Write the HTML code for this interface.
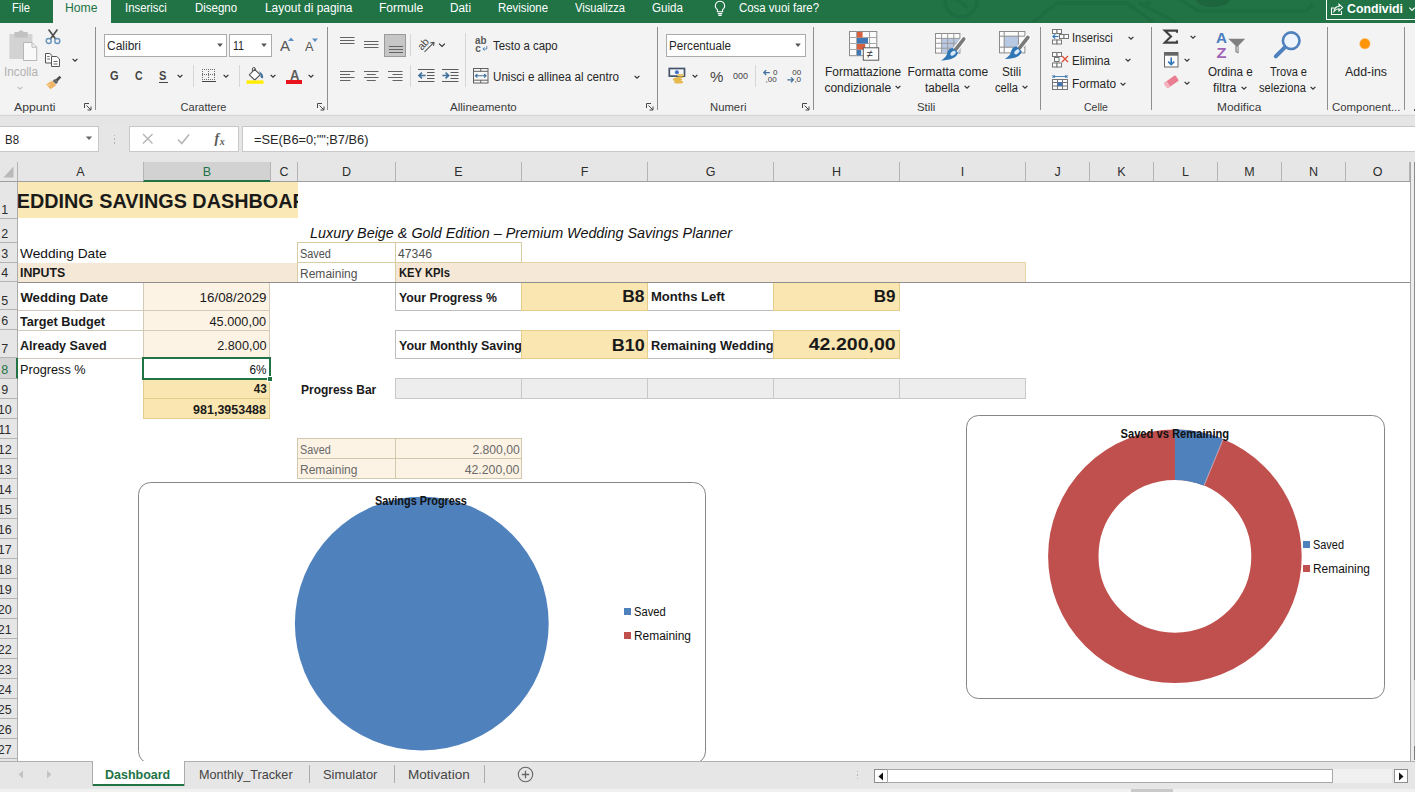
<!DOCTYPE html><html lang="it"><head><meta charset="utf-8"><title>Wedding Savings Dashboard - Excel</title><style>
*{box-sizing:border-box;margin:0;padding:0}
html,body{width:1415px;height:792px;overflow:hidden;background:#fff}
body{font-family:"Liberation Sans",sans-serif;font-size:12px;color:#262626;position:relative}
.a{position:absolute}
.t{position:absolute;white-space:nowrap;line-height:1}
.clip{position:absolute;overflow:hidden}
svg{position:absolute;overflow:visible}
</style></head><body>
<div class="a" style="left:0px;top:0px;width:1415px;height:22.5px;background:#217346;"></div>
<svg style="left:0;top:0" width="1415" height="22" viewBox="0 0 1415 22"><g fill="none" stroke="#1e6c41" stroke-width="3.5" stroke-linejoin="round"><circle cx="961" cy="1" r="16"/><path d="M1033 22 L1057 3 H1127 L1153 22"/><path d="M1139 3 L1176 22"/><path d="M1178 -2 L1198.5 11.3 H1306 L1313 4"/></g><circle cx="1147.7" cy="3.4" r="3" fill="#1e6c41"/><ellipse cx="1213" cy="-1" rx="17" ry="8" fill="#1c653d"/><path d="M953 -3 L968 8" stroke="#1e6c41" stroke-width="3" fill="none"/></svg>
<div class="a" style="left:53px;top:0px;width:58px;height:24px;background:#f3f3f3;"></div>
<div class="t" style="top:2.05px;font-size:12.5px;color:#fff;left:12.00px;transform:scaleX(0.8936);transform-origin:0 50%;">File</div>
<div class="t" style="top:2.05px;font-size:12.5px;color:#217346;left:65.40px;transform:scaleX(0.9777);transform-origin:0 50%;">Home</div>
<div class="t" style="top:2.05px;font-size:12.5px;color:#fff;left:125.00px;transform:scaleX(0.9096);transform-origin:0 50%;">Inserisci</div>
<div class="t" style="top:2.05px;font-size:12.5px;color:#fff;left:194.60px;transform:scaleX(0.9158);transform-origin:0 50%;">Disegno</div>
<div class="t" style="top:2.05px;font-size:12.5px;color:#fff;left:264.60px;transform:scaleX(0.9526);transform-origin:0 50%;">Layout di pagina</div>
<div class="t" style="top:2.05px;font-size:12.5px;color:#fff;left:379.00px;transform:scaleX(0.9641);transform-origin:0 50%;">Formule</div>
<div class="t" style="top:2.05px;font-size:12.5px;color:#fff;left:450.00px;transform:scaleX(0.9447);transform-origin:0 50%;">Dati</div>
<div class="t" style="top:2.05px;font-size:12.5px;color:#fff;left:498.00px;transform:scaleX(0.9109);transform-origin:0 50%;">Revisione</div>
<div class="t" style="top:2.05px;font-size:12.5px;color:#fff;left:575.00px;transform:scaleX(0.8920);transform-origin:0 50%;">Visualizza</div>
<div class="t" style="top:2.05px;font-size:12.5px;color:#fff;left:652.00px;transform:scaleX(0.9294);transform-origin:0 50%;">Guida</div>
<div class="t" style="top:2.05px;font-size:12.5px;color:#fff;left:739.00px;transform:scaleX(0.9138);transform-origin:0 50%;">Cosa vuoi fare?</div>
<svg style="left:711.5px;top:0px" width="16" height="18" viewBox="0 0 16 18"><g fill="none" stroke="#fff" stroke-width="1.1"><path d="M8 1.2 a4.6 4.6 0 0 1 2.6 8.4 v2.2 h-5.2 v-2.2 a4.6 4.6 0 0 1 2.6 -8.4 Z"/><path d="M5.8 13.6 h4.4 M6.4 15.4 h3.2"/></g></svg>
<div class="a" style="left:1326px;top:-2px;width:94px;height:22px;border:1px solid #fff;"></div>
<svg style="left:1330px;top:2px" width="14" height="14" viewBox="0 0 14 14"><g fill="none" stroke="#fff" stroke-width="1.1"><path d="M4.5 6 H1.5 V12.5 H11.5 V9"/><path d="M4 9.5 Q4.5 4.5 9 4.5 V2.2 L12.6 5.6 L9 9 V6.8 Q6 6.8 4 9.5 Z"/></g></svg>
<div class="t" style="top:3.05px;font-size:12.5px;font-weight:700;color:#fff;left:1347.00px;transform:scaleX(0.9835);transform-origin:0 50%;">Condividi</div>
<svg style="left:1406.5px;top:3.5px" width="10" height="10" viewBox="0 0 10 10"><path d="M2.4 3.7 L5 6.3 L7.6 3.7" fill="none" stroke="#fff" stroke-width="1.2"/></svg>
<div class="a" style="left:0px;top:22.5px;width:1415px;height:104.5px;background:#e5e5e5;"></div>
<div class="a" style="left:0px;top:22.5px;width:1415px;height:92.5px;background:#f3f3f3;"></div>
<div class="a" style="left:0px;top:114px;width:1415px;height:1px;background:#ececec;"></div>
<div class="a" style="left:0px;top:115px;width:1415px;height:1px;background:#d6d6d6;"></div>
<div class="a" style="left:95px;top:27px;width:1px;height:83px;background:#8f8f8f;"></div>
<div class="a" style="left:327px;top:27px;width:1px;height:83px;background:#8f8f8f;"></div>
<div class="a" style="left:657px;top:27px;width:1px;height:83px;background:#8f8f8f;"></div>
<div class="a" style="left:813px;top:27px;width:1px;height:83px;background:#8f8f8f;"></div>
<div class="a" style="left:1040px;top:27px;width:1px;height:83px;background:#8f8f8f;"></div>
<div class="a" style="left:1151px;top:27px;width:1px;height:83px;background:#8f8f8f;"></div>
<div class="a" style="left:1327px;top:27px;width:1px;height:83px;background:#8f8f8f;"></div>
<div class="a" style="left:1404px;top:27px;width:1px;height:83px;background:#8f8f8f;"></div>
<div class="a" style="left:193px;top:65px;width:1px;height:22px;background:#d6d6d6;"></div>
<div class="a" style="left:239px;top:65px;width:1px;height:22px;background:#d6d6d6;"></div>
<div class="a" style="left:410px;top:34px;width:1px;height:22px;background:#d6d6d6;"></div>
<div class="a" style="left:410px;top:65px;width:1px;height:22px;background:#d6d6d6;"></div>
<div class="a" style="left:465px;top:33px;width:1px;height:54px;background:#d6d6d6;"></div>
<div class="a" style="left:755px;top:65px;width:1px;height:22px;background:#d6d6d6;"></div>
<div class="t" style="top:101.80px;font-size:11px;color:#3b3b3b;left:14.00px;transform:scaleX(1.1123);transform-origin:0 50%;">Appunti</div>
<div class="t" style="top:101.80px;font-size:11px;color:#3b3b3b;left:180.60px;">Carattere</div>
<div class="t" style="top:101.80px;font-size:11px;color:#3b3b3b;left:450.40px;transform:scaleX(1.0504);transform-origin:0 50%;">Allineamento</div>
<div class="t" style="top:101.80px;font-size:11px;color:#3b3b3b;left:709.60px;transform:scaleX(1.0268);transform-origin:0 50%;">Numeri</div>
<div class="t" style="top:101.80px;font-size:11px;color:#3b3b3b;left:917.40px;transform:scaleX(1.0381);transform-origin:0 50%;">Stili</div>
<div class="t" style="top:101.80px;font-size:11px;color:#3b3b3b;left:1083.70px;transform:scaleX(0.9534);transform-origin:0 50%;">Celle</div>
<div class="t" style="top:101.80px;font-size:11px;color:#3b3b3b;left:1217.40px;transform:scaleX(1.0840);transform-origin:0 50%;">Modifica</div>
<div class="t" style="top:101.80px;font-size:11px;color:#3b3b3b;left:1331.60px;transform:scaleX(1.0358);transform-origin:0 50%;">Component...</div>
<svg style="left:84px;top:103px" width="8" height="8" viewBox="0 0 8 8"><path d="M0.5 5 V0.5 H5" fill="none" stroke="#484848" stroke-width="1"/><path d="M2.5 2.5 L7 7 M7 3.5 V7 H3.5" fill="none" stroke="#484848" stroke-width="1"/></svg>
<svg style="left:316.5px;top:103px" width="8" height="8" viewBox="0 0 8 8"><path d="M0.5 5 V0.5 H5" fill="none" stroke="#484848" stroke-width="1"/><path d="M2.5 2.5 L7 7 M7 3.5 V7 H3.5" fill="none" stroke="#484848" stroke-width="1"/></svg>
<svg style="left:646px;top:103px" width="8" height="8" viewBox="0 0 8 8"><path d="M0.5 5 V0.5 H5" fill="none" stroke="#484848" stroke-width="1"/><path d="M2.5 2.5 L7 7 M7 3.5 V7 H3.5" fill="none" stroke="#484848" stroke-width="1"/></svg>
<svg style="left:802px;top:103px" width="8" height="8" viewBox="0 0 8 8"><path d="M0.5 5 V0.5 H5" fill="none" stroke="#484848" stroke-width="1"/><path d="M2.5 2.5 L7 7 M7 3.5 V7 H3.5" fill="none" stroke="#484848" stroke-width="1"/></svg>
<div class="a" style="left:1413.6px;top:108.6px;width:1.400000000000091px;height:2.4000000000000057px;background:#555;"></div>
<svg style="left:9px;top:31px" width="29" height="31" viewBox="0 0 29 31"><rect x="0.4" y="3" width="23" height="25" fill="#d3d3d3"/><rect x="5.4" y="1" width="13.3" height="5.5" fill="#c2c2c2"/><rect x="9.5" y="-0.5" width="5" height="3" rx="1.5" fill="#c2c2c2"/><path d="M14.5 11.5 H23 L27.7 16.2 V29.5 H14.5 Z" fill="#f9f9f9" stroke="#b7b7b7" stroke-width="1"/><path d="M23 11.5 V16.2 H27.7" fill="none" stroke="#b7b7b7" stroke-width="1"/></svg>
<div class="t" style="top:66.05px;font-size:12.5px;color:#b1b1b1;left:3.50px;transform:scaleX(0.9409);transform-origin:0 50%;">Incolla</div>
<svg style="left:15px;top:82.5px" width="10" height="10" viewBox="0 0 10 10"><path d="M2.6 3.8 L5 6.2 L7.4 3.8" fill="none" stroke="#c0c0c0" stroke-width="1.2"/></svg>
<svg style="left:45px;top:29px" width="16" height="16" viewBox="0 0 16 16"><g fill="none"><path d="M3.6 0.5 L10.8 10.2 M12.4 0.5 L5.2 10.2" stroke="#505050" stroke-width="1.7"/><circle cx="3.7" cy="12" r="2.5" stroke="#6a93bb" stroke-width="1.4"/><circle cx="12.3" cy="12" r="2.5" stroke="#6a93bb" stroke-width="1.4"/></g></svg>
<svg style="left:45px;top:53px" width="16" height="14" viewBox="0 0 16 14"><g fill="#fbfbfb" stroke="#555" stroke-width="1"><path d="M0.5 0.5 H4.8 L7.5 3 V10 H0.5 Z"/><path d="M6.5 3.5 H11.8 L14.5 6 V13.5 H6.5 Z"/></g><path d="M2.2 3.5 H4.6 M2.2 6 H5 M8.5 8.5 H12.5 M8.5 11 H12.5" stroke="#6b6b6b" stroke-width="1" fill="none"/></svg>
<svg style="left:70.4px;top:55.4px" width="10" height="10" viewBox="0 0 10 10"><path d="M2.6 3.8 L5 6.2 L7.4 3.8" fill="none" stroke="#303030" stroke-width="1.2"/></svg>
<svg style="left:45px;top:75px" width="17" height="15" viewBox="0 0 17 15"><g><path d="M10.5 4.5 L14.5 0.8 L16.3 2.6 L12.5 6.6 Z" fill="#4d4d4d"/><path d="M7.5 6 L10 3.8 L13.2 7 L11 9.3 Z" fill="#666"/><path d="M1 9.5 L6.8 5.8 L11.2 10.2 L5.5 14.2 Z" fill="#f0b463"/><path d="M1 9.5 L3.5 11.6 L6 9.2 Z" fill="#f6cf98"/></g></svg>
<div class="a" style="left:104px;top:34px;width:123px;height:23px;background:#fff;border:1px solid #ababab;"></div>
<div class="t" style="top:40.05px;font-size:12.5px;color:#262626;left:107.30px;transform:scaleX(0.9597);transform-origin:0 50%;">Calibri</div>
<svg style="left:214.7px;top:40.3px" width="10" height="10" viewBox="0 0 10 10"><path d="M2.2 3.6 L7.8 3.6 L5 6.9 Z" fill="#555"/></svg>
<div class="a" style="left:229px;top:34px;width:43px;height:23px;background:#fff;border:1px solid #ababab;"></div>
<div class="t" style="top:40.05px;font-size:12.5px;color:#262626;left:232.70px;transform:scaleX(0.8477);transform-origin:0 50%;">11</div>
<svg style="left:259px;top:40.3px" width="10" height="10" viewBox="0 0 10 10"><path d="M2.2 3.6 L7.8 3.6 L5 6.9 Z" fill="#555"/></svg>
<div class="t" style="top:38.30px;font-size:15px;color:#555;left:280.00px;">A</div>
<svg style="left:288px;top:37px" width="6" height="5" viewBox="0 0 6 5"><path d="M0 4 L3 0.5 L6 4 Z" fill="#5a8fc4"/></svg>
<div class="t" style="top:41.05px;font-size:12.5px;color:#555;left:305.00px;transform:scaleX(1.0194);transform-origin:0 50%;">A</div>
<svg style="left:312px;top:37.5px" width="6" height="5" viewBox="0 0 6 5"><path d="M0 0.5 L6 0.5 L3 4 Z" fill="#5a8fc4"/></svg>
<div class="t" style="top:70.05px;font-size:12.5px;font-weight:700;color:#444;left:110.30px;transform:scaleX(0.8845);transform-origin:0 50%;">G</div>
<div class="t" style="top:70.05px;font-size:12.5px;font-weight:700;color:#444;left:135.40px;transform:scaleX(0.8419);transform-origin:0 50%;">C</div>
<div class="t" style="top:70.05px;font-size:12.5px;font-weight:700;color:#444;left:159.40px;transform:scaleX(0.8875);transform-origin:0 50%;">S</div>
<div class="a" style="left:159px;top:81.5px;width:8.5px;height:1.0px;background:#444;"></div>
<svg style="left:175.3px;top:71px" width="10" height="10" viewBox="0 0 10 10"><path d="M2.6 3.8 L5 6.2 L7.4 3.8" fill="none" stroke="#303030" stroke-width="1.2"/></svg>
<svg style="left:201px;top:68px" width="15" height="15" viewBox="0 0 15 15"><g stroke="#6e6e6e" stroke-width="1" stroke-dasharray="1 1" fill="none" shape-rendering="crispEdges"><path d="M1 1.5 H14 M1 6.5 H14 M1 11.5 H14 M1.5 1 V12 M7.5 1 V12 M13.5 1 V12"/></g><path d="M0.5 13.5 H14.5" stroke="#444" stroke-width="1.2" shape-rendering="crispEdges"/></svg>
<svg style="left:221.4px;top:71px" width="10" height="10" viewBox="0 0 10 10"><path d="M2.6 3.8 L5 6.2 L7.4 3.8" fill="none" stroke="#303030" stroke-width="1.2"/></svg>
<svg style="left:246px;top:66px" width="18" height="19" viewBox="0 0 18 19"><path d="M8.7 3.4 L14.2 8.8 L8.7 14 L3.3 8.8 Z" fill="#fcfcfc" stroke="#555" stroke-width="1.1" stroke-linejoin="round"/><path d="M6.4 5.8 V3 a1.5 1.5 0 0 1 3 0 V4.2" fill="none" stroke="#555" stroke-width="1"/><path d="M12.6 5 Q18.2 8 17 12.2 Q14.2 12.6 14.6 9.2 Q14.4 7 12.6 5 Z" fill="#41719c"/><rect x="0.5" y="14.4" width="17" height="3.4" fill="#ffed00"/></svg>
<svg style="left:267.6px;top:71px" width="10" height="10" viewBox="0 0 10 10"><path d="M2.6 3.8 L5 6.2 L7.4 3.8" fill="none" stroke="#303030" stroke-width="1.2"/></svg>
<div class="t" style="top:68.30px;font-size:14px;font-weight:700;color:#5e5e5e;left:289.80px;transform:scaleX(0.9297);transform-origin:0 50%;">A</div>
<div class="a" style="left:286px;top:80.3px;width:16px;height:3.5px;background:#e8131c;"></div>
<svg style="left:306px;top:71px" width="10" height="10" viewBox="0 0 10 10"><path d="M2.6 3.8 L5 6.2 L7.4 3.8" fill="none" stroke="#303030" stroke-width="1.2"/></svg>
<svg style="left:339.8px;top:37px" width="15" height="9" viewBox="0 0 15 9"><path d="M0 0.5 H14.5" stroke="#636363" stroke-width="1"/><path d="M0 3.5 H14.5" stroke="#636363" stroke-width="1"/><path d="M0 6.5 H14.5" stroke="#636363" stroke-width="1"/></svg>
<svg style="left:363.7px;top:41px" width="15" height="9" viewBox="0 0 15 9"><path d="M0 0.5 H14.5" stroke="#636363" stroke-width="1"/><path d="M0 3.5 H14.5" stroke="#636363" stroke-width="1"/><path d="M0 6.5 H14.5" stroke="#636363" stroke-width="1"/></svg>
<div class="a" style="left:384px;top:34px;width:22px;height:23px;background:#c6c6c6;border:1px solid #9a9a9a;"></div>
<svg style="left:388.5px;top:46px" width="14" height="9" viewBox="0 0 14 9"><path d="M0 0.5 H14" stroke="#636363" stroke-width="1"/><path d="M0 3.5 H14" stroke="#636363" stroke-width="1"/><path d="M0 6.5 H14" stroke="#636363" stroke-width="1"/></svg>
<svg style="left:339.8px;top:71px" width="15" height="12" viewBox="0 0 15 12"><path d="M0 0.5 H14.5" stroke="#636363" stroke-width="1"/><path d="M0 3.5 H10" stroke="#636363" stroke-width="1"/><path d="M0 6.5 H14.5" stroke="#636363" stroke-width="1"/><path d="M0 9.5 H10.5" stroke="#636363" stroke-width="1"/></svg>
<svg style="left:363.7px;top:71px" width="14.5" height="12" viewBox="0 0 14.5 12"><path d="M0.0 0.5 H14.5" stroke="#636363" stroke-width="1"/><path d="M2.75 3.5 H11.75" stroke="#636363" stroke-width="1"/><path d="M0.0 6.5 H14.5" stroke="#636363" stroke-width="1"/><path d="M2.75 9.5 H11.75" stroke="#636363" stroke-width="1"/></svg>
<svg style="left:388px;top:71px" width="14.5" height="12" viewBox="0 0 14.5 12"><path d="M0.0 0.5 H14.5" stroke="#636363" stroke-width="1"/><path d="M4.5 3.5 H14.5" stroke="#636363" stroke-width="1"/><path d="M0.0 6.5 H14.5" stroke="#636363" stroke-width="1"/><path d="M4.5 9.5 H14.5" stroke="#636363" stroke-width="1"/></svg>
<svg style="left:417px;top:36px" width="20" height="18" viewBox="0 0 20 18"><g transform="rotate(-48 7 8)"><text x="0.5" y="11" font-family="Liberation Sans,sans-serif" font-size="10.5" fill="#4a4a4a">ab</text></g><path d="M7.5 15.8 L17 6.4 M17.2 6.2 L13.4 6.9 M17.2 6.2 L16.5 10" stroke="#5a5a5a" stroke-width="1.1" fill="none"/></svg>
<svg style="left:437px;top:40.3px" width="10" height="10" viewBox="0 0 10 10"><path d="M2.1 3.55 L5 6.45 L7.9 3.55" fill="none" stroke="#303030" stroke-width="1.2"/></svg>
<svg style="left:417.5px;top:69px" width="17" height="13" viewBox="0 0 17 13"><g stroke="#5a5a5a" stroke-width="1"><path d="M0 0.5 H16.5 M9 3.5 H16.5 M9 6.5 H16.5 M9 9.5 H16.5 M0 12.5 H16.5"/></g><path d="M7.6 6.5 H1.4 M4 3.6 L1 6.5 L4 9.4" stroke="#41719c" stroke-width="1.7" fill="none"/></svg>
<svg style="left:441.8px;top:69px" width="17" height="13" viewBox="0 0 17 13"><g stroke="#5a5a5a" stroke-width="1"><path d="M0 0.5 H16.5 M8.5 3.5 H16.5 M8.5 6.5 H16.5 M8.5 9.5 H16.5 M0 12.5 H16.5"/></g><path d="M0.4 6.5 H6.2 M3.6 3.6 L6.6 6.5 L3.6 9.4" stroke="#41719c" stroke-width="1.7" fill="none"/></svg>
<svg style="left:474.5px;top:36px" width="14" height="17" viewBox="0 0 14 17"><text x="0" y="7.7" font-family="Liberation Sans,sans-serif" font-size="10" font-weight="700" fill="#5a5a5a" textLength="11.5" lengthAdjust="spacingAndGlyphs">ab</text><text x="0.3" y="15.6" font-family="Liberation Sans,sans-serif" font-size="10" font-weight="700" fill="#5a5a5a">c</text><path d="M11.8 10 V13 H8 M9.6 11.4 L7.8 13 L9.6 14.6" stroke="#5b86b8" stroke-width="1" fill="none"/></svg>
<div class="t" style="top:40.30px;font-size:12px;left:493.00px;transform:scaleX(0.9508);transform-origin:0 50%;">Testo a capo</div>
<svg style="left:473px;top:68px" width="16" height="16" viewBox="0 0 16 16"><rect x="0.5" y="0.5" width="14.5" height="14.5" fill="#f7f7f7" stroke="#606060"/><path d="M0.5 3.3 H15 M0.5 12.2 H15 M7.75 0.5 V3.3 M7.75 12.2 V15" stroke="#606060" fill="none"/><path d="M2.6 7.75 H12.9 M4.4 6 L2.4 7.75 L4.4 9.5 M11.1 6 L13.1 7.75 L11.1 9.5" stroke="#41719c" fill="none" stroke-width="1.1"/></svg>
<div class="t" style="top:71.30px;font-size:12px;left:492.50px;transform:scaleX(0.9687);transform-origin:0 50%;">Unisci e allinea al centro</div>
<svg style="left:632.3px;top:71.8px" width="10" height="10" viewBox="0 0 10 10"><path d="M2.6 3.8 L5 6.2 L7.4 3.8" fill="none" stroke="#303030" stroke-width="1.2"/></svg>
<div class="a" style="left:666px;top:34px;width:140px;height:23px;background:#fff;border:1px solid #ababab;"></div>
<div class="t" style="top:40.05px;font-size:12.5px;left:669.30px;transform:scaleX(0.9293);transform-origin:0 50%;">Percentuale</div>
<svg style="left:793.3px;top:40.3px" width="10" height="10" viewBox="0 0 10 10"><path d="M2.2 3.6 L7.8 3.6 L5 6.9 Z" fill="#555"/></svg>
<svg style="left:668px;top:67px" width="18" height="17" viewBox="0 0 18 17"><g fill="#e6b94f"><ellipse cx="11.6" cy="9.6" rx="4.6" ry="1.7"/><ellipse cx="9.4" cy="12.4" rx="4.6" ry="1.7"/><ellipse cx="10.6" cy="15" rx="4.6" ry="1.6"/></g><rect x="1.3" y="1.5" width="15.2" height="7.6" fill="#f4f6fa" stroke="#44546a" stroke-width="1.7"/><circle cx="8.9" cy="5.3" r="2" fill="#4472c4"/><g fill="#edc872"><ellipse cx="12.6" cy="8.2" rx="3.4" ry="1.4"/></g></svg>
<svg style="left:689.5px;top:71px" width="10" height="10" viewBox="0 0 10 10"><path d="M2.6 3.8 L5 6.2 L7.4 3.8" fill="none" stroke="#303030" stroke-width="1.2"/></svg>
<div class="t" style="top:69.05px;font-size:15.5px;color:#444;left:710.00px;transform:scaleX(0.9723);transform-origin:0 50%;">%</div>
<div class="t" style="top:71.05px;font-size:9.5px;color:#444;left:732.50px;transform:scaleX(0.9463);transform-origin:0 50%;">000</div>
<svg style="left:763px;top:68px" width="15" height="15" viewBox="0 0 15 15"><text x="10" y="6.6" font-family="Liberation Sans,sans-serif" font-size="8" fill="#3b3b3b">0</text><text x="2.6" y="14.2" font-family="Liberation Sans,sans-serif" font-size="8" fill="#3b3b3b">,00</text><path d="M6.8 4.6 H0.8 M3.2 2.2 L0.8 4.6 L3.2 7" stroke="#41719c" stroke-width="1.3" fill="none"/></svg>
<svg style="left:787px;top:68px" width="15" height="15" viewBox="0 0 15 15"><text x="5.2" y="6.6" font-family="Liberation Sans,sans-serif" font-size="8" fill="#3b3b3b">00</text><text x="7.4" y="14.2" font-family="Liberation Sans,sans-serif" font-size="8" fill="#3b3b3b">,0</text><path d="M0.3 11.8 H6.4 M4 9.4 L6.4 11.8 L4 14.2" stroke="#41719c" stroke-width="1.3" fill="none"/></svg>
<svg style="left:849px;top:31px" width="31" height="30" viewBox="0 0 31 30"><rect x="0.5" y="0.5" width="27.3" height="24.2" fill="#fbfbfb" stroke="#8c8c8c"/><path d="M0.5 6.5 H27.8 M0.5 12.5 H27.8 M0.5 18.5 H27.8 M7.5 0.5 V24.7 M20.5 0.5 V24.7" stroke="#a8a8a8" fill="none"/><rect x="8" y="1" width="5.6" height="5.5" fill="#d9603f"/><rect x="8" y="7" width="11" height="5.5" fill="#3f78b5"/><rect x="8" y="13" width="8.2" height="5.5" fill="#d9603f"/><rect x="8" y="19" width="4.2" height="5.5" fill="#3f78b5"/><rect x="14.3" y="16.8" width="15.4" height="12.4" fill="#fdfdfd" stroke="#5a5a5a"/><text x="17.6" y="27.2" font-family="Liberation Sans,sans-serif" font-size="11.5" fill="#333">≠</text></svg>
<div class="t" style="top:66.30px;font-size:12px;left:825.00px;transform:scaleX(0.9935);transform-origin:0 50%;">Formattazione</div>
<div class="t" style="top:82.30px;font-size:12px;left:824.40px;">condizionale</div>
<svg style="left:892.5px;top:82px" width="10" height="10" viewBox="0 0 10 10"><path d="M2.6 3.8 L5 6.2 L7.4 3.8" fill="none" stroke="#303030" stroke-width="1.2"/></svg>
<svg style="left:935px;top:33px" width="31" height="28" viewBox="0 0 31 28"><rect x="0.5" y="0.5" width="24.4" height="19.6" fill="#fbfbfb" stroke="#8c8c8c"/><rect x="6.6" y="5.4" width="18" height="14.4" fill="#b9c9e4"/><path d="M0.5 5.4 H24.9 M0.5 10.3 H24.9 M0.5 15.2 H24.9 M6.6 0.5 V20.1 M12.7 0.5 V20.1 M18.8 0.5 V20.1" stroke="#9a9a9a" fill="none"/><path d="M28.8 6 L20.6 16.6" stroke="#fbfbfb" stroke-width="6" stroke-linecap="round"/><path d="M28.8 6 L20.4 16.8" stroke="#7a7a7a" stroke-width="3.6" stroke-linecap="round"/><path d="M17.8 15 L23 19.6 Q21 27.4 6 27.4 Q11.6 24.4 12.2 20 Q13.4 15.2 17.8 15 Z" fill="#2e75b6"/><ellipse cx="18" cy="20" rx="3" ry="1.9" fill="#dce8f5" transform="rotate(-40 18.4 20)"/></svg>
<div class="t" style="top:66.30px;font-size:12px;left:907.50px;">Formatta come</div>
<div class="t" style="top:82.30px;font-size:12px;left:925.30px;transform:scaleX(0.9728);transform-origin:0 50%;">tabella</div>
<svg style="left:961.7px;top:82px" width="10" height="10" viewBox="0 0 10 10"><path d="M2.6 3.8 L5 6.2 L7.4 3.8" fill="none" stroke="#303030" stroke-width="1.2"/></svg>
<svg style="left:999px;top:31px" width="31" height="30" viewBox="0 0 31 30"><rect x="0.5" y="0.5" width="25.4" height="21.4" fill="#fbfbfb" stroke="#8c8c8c"/><rect x="5.2" y="5.2" width="14.2" height="11" fill="#b9c9e4"/><path d="M0.5 5.2 H25.9 M0.5 16.2 H25.9 M5.2 0.5 V21.9 M19.4 0.5 V21.9" stroke="#8c8c8c" fill="none"/><path d="M28.9 6.4 L20.6 17" stroke="#fbfbfb" stroke-width="6" stroke-linecap="round"/><path d="M28.9 6.4 L20.4 17.2" stroke="#7a7a7a" stroke-width="3.6" stroke-linecap="round"/><path d="M17.6 15.6 L22.8 20.2 Q20.8 28 5.8 28 Q11.4 25 12 20.6 Q13.2 15.8 17.6 15.6 Z" fill="#2e75b6"/><ellipse cx="17.8" cy="20.6" rx="3" ry="1.9" fill="#dce8f5" transform="rotate(-40 18.2 20.6)"/></svg>
<div class="t" style="top:66.30px;font-size:12px;left:1002.00px;transform:scaleX(0.9826);transform-origin:0 50%;">Stili</div>
<div class="t" style="top:82.30px;font-size:12px;left:994.80px;transform:scaleX(0.9319);transform-origin:0 50%;">cella</div>
<svg style="left:1019.5px;top:82px" width="10" height="10" viewBox="0 0 10 10"><path d="M2.6 3.8 L5 6.2 L7.4 3.8" fill="none" stroke="#303030" stroke-width="1.2"/></svg>
<svg style="left:1052px;top:29px" width="17" height="16" viewBox="0 0 17 16"><g fill="#fdfdfd" stroke="#757575" stroke-width="1"><rect x="0.5" y="0.5" width="4.5" height="4"/><rect x="5" y="0.5" width="4.5" height="4"/><rect x="7.5" y="5.5" width="4.5" height="4"/><rect x="12" y="5.5" width="4.5" height="4"/><rect x="0.5" y="11" width="4.5" height="4"/><rect x="5" y="11" width="4.5" height="4"/></g><path d="M6.5 7.5 H1 M3.2 5.3 L1 7.5 L3.2 9.7" stroke="#2e75b6" stroke-width="1.2" fill="none"/></svg>
<div class="t" style="top:32.30px;font-size:12px;left:1071.60px;transform:scaleX(0.9270);transform-origin:0 50%;">Inserisci</div>
<svg style="left:1126.3px;top:32.6px" width="10" height="10" viewBox="0 0 10 10"><path d="M2.6 3.8 L5 6.2 L7.4 3.8" fill="none" stroke="#303030" stroke-width="1.2"/></svg>
<svg style="left:1052px;top:52px" width="17" height="16" viewBox="0 0 17 16"><g fill="#fdfdfd" stroke="#757575" stroke-width="1"><rect x="0.5" y="0.5" width="4.5" height="4"/><rect x="5" y="0.5" width="4.5" height="4"/><rect x="2.5" y="5.5" width="4.5" height="4"/><rect x="0.5" y="11" width="4.5" height="4"/><rect x="5" y="11" width="4.5" height="4"/></g><path d="M10 4 L16 10 M16 4 L10 10" stroke="#e0533c" stroke-width="1.4" fill="none"/></svg>
<div class="t" style="top:55.30px;font-size:12px;left:1071.60px;transform:scaleX(0.9657);transform-origin:0 50%;">Elimina</div>
<svg style="left:1123.3px;top:55.4px" width="10" height="10" viewBox="0 0 10 10"><path d="M2.6 3.8 L5 6.2 L7.4 3.8" fill="none" stroke="#303030" stroke-width="1.2"/></svg>
<svg style="left:1052px;top:75px" width="17" height="16" viewBox="0 0 17 16"><path d="M1 1.5 H15 M1 0 V3 M15 0 V3 M3 0.3 L1.2 1.5 L3 2.7 M13 0.3 L14.8 1.5 L13 2.7" stroke="#3d7ab5" stroke-width="0.9" fill="none"/><rect x="0.5" y="4.5" width="15" height="10" fill="#fdfdfd" stroke="#757575"/><path d="M0.5 7.5 H15.5 M0.5 11 H15.5 M5.5 4.5 V14.5 M10.5 4.5 V14.5" stroke="#757575" fill="none"/><rect x="5.5" y="7.5" width="5" height="3.5" fill="#3f78b5"/></svg>
<div class="t" style="top:78.30px;font-size:12px;left:1071.60px;transform:scaleX(0.9848);transform-origin:0 50%;">Formato</div>
<svg style="left:1117.5px;top:78.8px" width="10" height="10" viewBox="0 0 10 10"><path d="M2.6 3.8 L5 6.2 L7.4 3.8" fill="none" stroke="#303030" stroke-width="1.2"/></svg>
<svg style="left:1163px;top:29px" width="16" height="16" viewBox="0 0 16 16"><path d="M14 3.8 V1.6 H1.8 L8 7.6 L1.8 13.6 H14 V11.4" fill="none" stroke="#404040" stroke-width="2.1" stroke-linejoin="miter"/></svg>
<svg style="left:1188.4px;top:32px" width="10" height="10" viewBox="0 0 10 10"><path d="M2.6 3.8 L5 6.2 L7.4 3.8" fill="none" stroke="#303030" stroke-width="1.2"/></svg>
<svg style="left:1164px;top:52px" width="15" height="16" viewBox="0 0 15 16"><rect x="0.5" y="0.5" width="13.5" height="14.5" fill="#fdfdfd" stroke="#666"/><rect x="0.5" y="0.5" width="13.5" height="3.2" fill="#666"/><path d="M7.2 5.5 V12.5 M4.2 9.6 L7.2 12.6 L10.2 9.6" stroke="#2e75b6" stroke-width="1.6" fill="none"/></svg>
<svg style="left:1181.5px;top:55px" width="10" height="10" viewBox="0 0 10 10"><path d="M2.6 3.8 L5 6.2 L7.4 3.8" fill="none" stroke="#303030" stroke-width="1.2"/></svg>
<svg style="left:1164px;top:75px" width="15" height="14" viewBox="0 0 15 14"><g transform="rotate(-35 7.5 7)"><rect x="0.5" y="3.5" width="14" height="6.5" rx="1.2" fill="#ea7d92"/><rect x="0.5" y="3.5" width="3.6" height="6.5" rx="1.2" fill="#f3b4c0"/></g></svg>
<svg style="left:1181.5px;top:78px" width="10" height="10" viewBox="0 0 10 10"><path d="M2.6 3.8 L5 6.2 L7.4 3.8" fill="none" stroke="#303030" stroke-width="1.2"/></svg>
<svg style="left:1216px;top:31px" width="30" height="27" viewBox="0 0 30 27"><text x="0" y="12.3" font-family="Liberation Sans,sans-serif" font-size="15" font-weight="700" fill="#4a7cc0" textLength="11" lengthAdjust="spacingAndGlyphs">A</text><text x="0.6" y="26.8" font-family="Liberation Sans,sans-serif" font-size="15" font-weight="700" fill="#a063b6" textLength="10" lengthAdjust="spacingAndGlyphs">Z</text><path d="M12.3 7.8 H29.2 L22.6 14.6 V22.4 L19.4 21 V14.6 Z" fill="#7f7f7f"/><path d="M20.6 15.5 V20.6 L21.6 21 V15.5 Z" fill="#e8e8e8"/></svg>
<div class="t" style="top:66.30px;font-size:12px;left:1208.40px;transform:scaleX(0.9690);transform-origin:0 50%;">Ordina e</div>
<div class="t" style="top:82.30px;font-size:12px;left:1213.00px;transform:scaleX(1.0322);transform-origin:0 50%;">filtra</div>
<svg style="left:1238.6px;top:82.5px" width="10" height="10" viewBox="0 0 10 10"><path d="M2.6 3.8 L5 6.2 L7.4 3.8" fill="none" stroke="#303030" stroke-width="1.2"/></svg>
<svg style="left:1273px;top:30px" width="29" height="28" viewBox="0 0 29 28"><circle cx="18.2" cy="10.7" r="8.3" fill="#eef4fb" stroke="#4e81bd" stroke-width="2.6"/><path d="M11.6 17.6 L2.8 26.4" stroke="#4e81bd" stroke-width="4" stroke-linecap="round"/></svg>
<div class="t" style="top:66.30px;font-size:12px;left:1269.90px;transform:scaleX(0.9195);transform-origin:0 50%;">Trova e</div>
<div class="t" style="top:82.30px;font-size:12px;left:1258.60px;transform:scaleX(0.9230);transform-origin:0 50%;">seleziona</div>
<svg style="left:1307.5px;top:82.5px" width="10" height="10" viewBox="0 0 10 10"><path d="M2.6 3.8 L5 6.2 L7.4 3.8" fill="none" stroke="#303030" stroke-width="1.2"/></svg>
<svg style="left:1357px;top:36px" width="16" height="16" viewBox="0 0 16 16"><defs><radialGradient id="og"><stop offset="0.74" stop-color="#ff9408"/><stop offset="1" stop-color="#ff8f0a" stop-opacity="0"/></radialGradient></defs><circle cx="7.9" cy="7.7" r="6" fill="url(#og)"/></svg>
<div class="t" style="top:66.30px;font-size:12px;left:1345.00px;transform:scaleX(1.0322);transform-origin:0 50%;">Add-ins</div>
<div class="a" style="left:0px;top:126px;width:1415px;height:27px;background:#e6e6e6;"></div>
<div class="a" style="left:-1px;top:126px;width:100px;height:26px;background:#fff;border:1px solid #c8c8c8;"></div>
<div class="t" style="top:134.05px;font-size:12.5px;left:4.50px;transform:scaleX(0.9156);transform-origin:0 50%;">B8</div>
<svg style="left:83.5px;top:133.2px" width="10" height="10" viewBox="0 0 10 10"><path d="M1.7999999999999998 3.4 L8.2 3.4 L5 7.1 Z" fill="#666"/></svg>
<div class="a" style="left:113.5px;top:134.5px;width:1.5px;height:1.5px;background:#b0b0b0;"></div>
<div class="a" style="left:113.5px;top:138.3px;width:1.5px;height:1.5px;background:#b0b0b0;"></div>
<div class="a" style="left:113.5px;top:142px;width:1.5px;height:1.5px;background:#b0b0b0;"></div>
<div class="a" style="left:129px;top:126px;width:110px;height:26px;background:#fff;border:1px solid #c8c8c8;"></div>
<svg style="left:141px;top:132px" width="14" height="14" viewBox="0 0 14 14"><path d="M2 2 L11.5 11.5 M11.5 2 L2 11.5" stroke="#b4b4b4" stroke-width="1.4" fill="none"/></svg>
<svg style="left:176px;top:132px" width="15" height="14" viewBox="0 0 15 14"><path d="M2 7.5 L5.8 11.5 L13 2.5" stroke="#b4b4b4" stroke-width="1.5" fill="none"/></svg>
<div class="t" style="top:132.30px;font-size:14px;font-weight:700;font-style:italic;color:#5a5a5a;left:214.50px;font-family:'Liberation Serif',serif;">f</div>
<div class="t" style="top:136.80px;font-size:10px;font-weight:700;font-style:italic;color:#5a5a5a;left:219.80px;font-family:'Liberation Serif',serif;">x</div>
<div class="a" style="left:242px;top:126px;width:1174px;height:26px;background:#fff;border:1px solid #c8c8c8;"></div>
<div class="t" style="top:134.05px;font-size:12.5px;left:254.40px;transform:scaleX(1.0249);transform-origin:0 50%;">=SE(B6=0;"";B7/B6)</div>
<div class="a" style="left:0px;top:152px;width:1415px;height:10px;background:#e6e6e6;"></div>
<div class="a" style="left:0px;top:162px;width:1415px;height:19px;background:#e6e6e6;"></div>
<div class="a" style="left:0px;top:181px;width:1410px;height:1px;background:#9e9e9e;"></div>
<div class="a" style="left:143px;top:162px;width:127px;height:19px;background:#d2d2d2;"></div>
<div class="a" style="left:143px;top:180px;width:127px;height:2px;background:#217346;"></div>
<div class="t" style="top:166.05px;font-size:12.5px;color:#2d2d2d;left:76.33px;">A</div>
<div class="a" style="left:143px;top:162px;width:1px;height:19px;background:#b4b4b4;"></div>
<div class="t" style="top:166.05px;font-size:12.5px;color:#217346;left:202.83px;">B</div>
<div class="a" style="left:270px;top:162px;width:1px;height:19px;background:#b4b4b4;"></div>
<div class="t" style="top:166.05px;font-size:12.5px;color:#2d2d2d;left:279.49px;">C</div>
<div class="a" style="left:297px;top:162px;width:1px;height:19px;background:#b4b4b4;"></div>
<div class="t" style="top:166.05px;font-size:12.5px;color:#2d2d2d;left:341.99px;">D</div>
<div class="a" style="left:395px;top:162px;width:1px;height:19px;background:#b4b4b4;"></div>
<div class="t" style="top:166.05px;font-size:12.5px;color:#2d2d2d;left:454.33px;">E</div>
<div class="a" style="left:521px;top:162px;width:1px;height:19px;background:#b4b4b4;"></div>
<div class="t" style="top:166.05px;font-size:12.5px;color:#2d2d2d;left:580.68px;">F</div>
<div class="a" style="left:647px;top:162px;width:1px;height:19px;background:#b4b4b4;"></div>
<div class="t" style="top:166.05px;font-size:12.5px;color:#2d2d2d;left:705.64px;">G</div>
<div class="a" style="left:773px;top:162px;width:1px;height:19px;background:#b4b4b4;"></div>
<div class="t" style="top:166.05px;font-size:12.5px;color:#2d2d2d;left:831.99px;">H</div>
<div class="a" style="left:899px;top:162px;width:1px;height:19px;background:#b4b4b4;"></div>
<div class="t" style="top:166.05px;font-size:12.5px;color:#2d2d2d;left:960.76px;">I</div>
<div class="a" style="left:1025px;top:162px;width:1px;height:19px;background:#b4b4b4;"></div>
<div class="t" style="top:166.05px;font-size:12.5px;color:#2d2d2d;left:1054.38px;">J</div>
<div class="a" style="left:1089px;top:162px;width:1px;height:19px;background:#b4b4b4;"></div>
<div class="t" style="top:166.05px;font-size:12.5px;color:#2d2d2d;left:1117.33px;">K</div>
<div class="a" style="left:1153px;top:162px;width:1px;height:19px;background:#b4b4b4;"></div>
<div class="t" style="top:166.05px;font-size:12.5px;color:#2d2d2d;left:1182.02px;">L</div>
<div class="a" style="left:1217px;top:162px;width:1px;height:19px;background:#b4b4b4;"></div>
<div class="t" style="top:166.05px;font-size:12.5px;color:#2d2d2d;left:1244.29px;">M</div>
<div class="a" style="left:1281px;top:162px;width:1px;height:19px;background:#b4b4b4;"></div>
<div class="t" style="top:166.05px;font-size:12.5px;color:#2d2d2d;left:1308.99px;">N</div>
<div class="a" style="left:1345px;top:162px;width:1px;height:19px;background:#b4b4b4;"></div>
<div class="t" style="top:166.05px;font-size:12.5px;color:#2d2d2d;left:1372.64px;">O</div>
<div class="a" style="left:1409px;top:162px;width:1px;height:19px;background:#b4b4b4;"></div>
<div class="a" style="left:17px;top:162px;width:1px;height:19px;background:#b4b4b4;"></div>
<svg style="left:3px;top:166px" width="11" height="12" viewBox="0 0 11 12"><path d="M10.5 0.5 V11.5 H0.5 Z" fill="#b9b9b9"/></svg>
<div class="a" style="left:0px;top:182px;width:17px;height:579px;background:#e6e6e6;"></div>
<div class="a" style="left:17px;top:182px;width:1px;height:579px;background:#ababab;"></div>
<div class="a" style="left:0px;top:358px;width:17px;height:21px;background:#d2d2d2;"></div>
<div class="a" style="left:16px;top:358px;width:2px;height:21px;background:#217346;"></div>
<div class="clip" style="left:0;top:182px;width:17px;height:579px">
<div class="t" style="left:1.32px;top:22.05px;font-size:12.5px;color:#2d2d2d">1</div>
<div class="a" style="left:0;top:36px;width:17px;height:1px;background:#b4b4b4"></div>
<div class="t" style="left:1.32px;top:46.05px;font-size:12.5px;color:#2d2d2d">2</div>
<div class="a" style="left:0;top:60px;width:17px;height:1px;background:#b4b4b4"></div>
<div class="t" style="left:1.32px;top:66.05px;font-size:12.5px;color:#2d2d2d">3</div>
<div class="a" style="left:0;top:80px;width:17px;height:1px;background:#b4b4b4"></div>
<div class="t" style="left:1.32px;top:85.05px;font-size:12.5px;color:#2d2d2d">4</div>
<div class="a" style="left:0;top:99px;width:17px;height:1px;background:#b4b4b4"></div>
<div class="t" style="left:1.32px;top:113.05px;font-size:12.5px;color:#2d2d2d">5</div>
<div class="a" style="left:0;top:127px;width:17px;height:1px;background:#b4b4b4"></div>
<div class="t" style="left:1.32px;top:133.05px;font-size:12.5px;color:#2d2d2d">6</div>
<div class="a" style="left:0;top:147px;width:17px;height:1px;background:#b4b4b4"></div>
<div class="t" style="left:1.32px;top:161.05px;font-size:12.5px;color:#2d2d2d">7</div>
<div class="a" style="left:0;top:175px;width:17px;height:1px;background:#b4b4b4"></div>
<div class="t" style="left:1.32px;top:182.05px;font-size:12.5px;color:#217346">8</div>
<div class="a" style="left:0;top:196px;width:17px;height:1px;background:#b4b4b4"></div>
<div class="t" style="left:1.32px;top:202.05px;font-size:12.5px;color:#2d2d2d">9</div>
<div class="a" style="left:0;top:216px;width:17px;height:1px;background:#b4b4b4"></div>
<div class="t" style="left:-2.15px;top:222.05px;font-size:12.5px;color:#2d2d2d">10</div>
<div class="a" style="left:0;top:236px;width:17px;height:1px;background:#b4b4b4"></div>
<div class="t" style="left:-1.69px;top:242.05px;font-size:12.5px;color:#2d2d2d">11</div>
<div class="a" style="left:0;top:256px;width:17px;height:1px;background:#b4b4b4"></div>
<div class="t" style="left:-2.15px;top:262.05px;font-size:12.5px;color:#2d2d2d">12</div>
<div class="a" style="left:0;top:276px;width:17px;height:1px;background:#b4b4b4"></div>
<div class="t" style="left:-2.15px;top:282.05px;font-size:12.5px;color:#2d2d2d">13</div>
<div class="a" style="left:0;top:296px;width:17px;height:1px;background:#b4b4b4"></div>
<div class="t" style="left:-2.15px;top:302.05px;font-size:12.5px;color:#2d2d2d">14</div>
<div class="a" style="left:0;top:316px;width:17px;height:1px;background:#b4b4b4"></div>
<div class="t" style="left:-2.15px;top:322.05px;font-size:12.5px;color:#2d2d2d">15</div>
<div class="a" style="left:0;top:336px;width:17px;height:1px;background:#b4b4b4"></div>
<div class="t" style="left:-2.15px;top:342.05px;font-size:12.5px;color:#2d2d2d">16</div>
<div class="a" style="left:0;top:356px;width:17px;height:1px;background:#b4b4b4"></div>
<div class="t" style="left:-2.15px;top:362.05px;font-size:12.5px;color:#2d2d2d">17</div>
<div class="a" style="left:0;top:376px;width:17px;height:1px;background:#b4b4b4"></div>
<div class="t" style="left:-2.15px;top:382.05px;font-size:12.5px;color:#2d2d2d">18</div>
<div class="a" style="left:0;top:396px;width:17px;height:1px;background:#b4b4b4"></div>
<div class="t" style="left:-2.15px;top:402.05px;font-size:12.5px;color:#2d2d2d">19</div>
<div class="a" style="left:0;top:416px;width:17px;height:1px;background:#b4b4b4"></div>
<div class="t" style="left:-2.15px;top:422.05px;font-size:12.5px;color:#2d2d2d">20</div>
<div class="a" style="left:0;top:436px;width:17px;height:1px;background:#b4b4b4"></div>
<div class="t" style="left:-2.15px;top:442.05px;font-size:12.5px;color:#2d2d2d">21</div>
<div class="a" style="left:0;top:456px;width:17px;height:1px;background:#b4b4b4"></div>
<div class="t" style="left:-2.15px;top:462.05px;font-size:12.5px;color:#2d2d2d">22</div>
<div class="a" style="left:0;top:476px;width:17px;height:1px;background:#b4b4b4"></div>
<div class="t" style="left:-2.15px;top:482.05px;font-size:12.5px;color:#2d2d2d">23</div>
<div class="a" style="left:0;top:496px;width:17px;height:1px;background:#b4b4b4"></div>
<div class="t" style="left:-2.15px;top:502.05px;font-size:12.5px;color:#2d2d2d">24</div>
<div class="a" style="left:0;top:516px;width:17px;height:1px;background:#b4b4b4"></div>
<div class="t" style="left:-2.15px;top:522.05px;font-size:12.5px;color:#2d2d2d">25</div>
<div class="a" style="left:0;top:536px;width:17px;height:1px;background:#b4b4b4"></div>
<div class="t" style="left:-2.15px;top:542.05px;font-size:12.5px;color:#2d2d2d">26</div>
<div class="a" style="left:0;top:556px;width:17px;height:1px;background:#b4b4b4"></div>
<div class="t" style="left:-2.15px;top:562.05px;font-size:12.5px;color:#2d2d2d">27</div>
<div class="a" style="left:0;top:576px;width:17px;height:1px;background:#b4b4b4"></div>
</div>
<div class="a" style="left:18px;top:182px;width:279.5px;height:36px;background:#fbe8b7;"></div>
<div class="clip" style="left:18px;top:182px;width:279.5px;height:36px">
<div class="t" style="left:-20.29px;top:8.55px;font-size:20.5px;font-weight:700;color:#1a1a1a;transform:scaleX(0.9660);transform-origin:0 50%">WEDDING SAVINGS DASHBOARD</div>
</div>
<div class="t" style="top:226.20px;font-size:14.2px;font-style:italic;color:#111;left:309.60px;transform:scaleX(1.0125);transform-origin:0 50%;">Luxury Beige &amp; Gold Edition – Premium Wedding Savings Planner</div>
<div class="t" style="top:247.05px;font-size:13.5px;color:#111;left:20.40px;transform:scaleX(1.0163);transform-origin:0 50%;">Wedding Date</div>
<div class="a" style="left:18px;top:263px;width:1008px;height:19px;background:#f5e8d7;"></div>
<div class="a" style="left:395px;top:262px;width:631px;height:1px;background:#e6d5a6;"></div>
<div class="a" style="left:1025px;top:263px;width:1px;height:19px;background:#e6d5a6;"></div>
<div class="t" style="top:266.20px;font-size:13.2px;font-weight:700;color:#1a1a1a;left:20.40px;transform:scaleX(0.9338);transform-origin:0 50%;">INPUTS</div>
<div class="t" style="top:266.20px;font-size:13.2px;font-weight:700;color:#1a1a1a;left:398.50px;transform:scaleX(0.8512);transform-origin:0 50%;">KEY KPIs</div>
<div class="a" style="left:297px;top:242px;width:99px;height:21px;background:#fff;border:1px solid #d6cea2;"></div>
<div class="a" style="left:395px;top:242px;width:127px;height:21px;background:#fff;border:1px solid #d6cea2;"></div>
<div class="a" style="left:297px;top:262px;width:99px;height:21px;background:#fff;border:1px solid #d6cea2;"></div>
<div class="t" style="top:248.15px;font-size:12.3px;color:#505050;left:299.80px;transform:scaleX(0.8831);transform-origin:0 50%;">Saved</div>
<div class="t" style="top:248.15px;font-size:12.3px;color:#505050;left:398.00px;transform:scaleX(0.9940);transform-origin:0 50%;">47346</div>
<div class="t" style="top:268.15px;font-size:12.3px;color:#505050;left:299.80px;transform:scaleX(0.9779);transform-origin:0 50%;">Remaining</div>
<div class="a" style="left:18px;top:282px;width:1392px;height:1px;background:#8f8f8f;"></div>
<div class="a" style="left:143px;top:282px;width:127px;height:29px;background:#fdf3e5;border:1px solid #d2cbba;"></div>
<div class="a" style="left:18px;top:310px;width:125px;height:1px;background:#d2cbba;"></div>
<div class="a" style="left:143px;top:310px;width:127px;height:21px;background:#fdf3e5;border:1px solid #d2cbba;"></div>
<div class="a" style="left:18px;top:330px;width:125px;height:1px;background:#d2cbba;"></div>
<div class="a" style="left:143px;top:330px;width:127px;height:29px;background:#fdf3e5;border:1px solid #d2cbba;"></div>
<div class="a" style="left:18px;top:358px;width:125px;height:1px;background:#d2cbba;"></div>
<div class="a" style="left:18px;top:282px;width:1392px;height:1px;background:#8f8f8f;"></div>
<div class="t" style="top:291.20px;font-size:13.2px;font-weight:700;color:#1a1a1a;left:20.40px;">Wedding Date</div>
<div class="t" style="top:291.05px;font-size:13.5px;color:#1a1a1a;right:1148.50px;transform:scaleX(0.9916);transform-origin:100% 50%;">16/08/2029</div>
<div class="t" style="top:315.20px;font-size:13.2px;font-weight:700;color:#1a1a1a;left:20.40px;transform:scaleX(0.9606);transform-origin:0 50%;">Target Budget</div>
<div class="t" style="top:315.05px;font-size:13.5px;color:#1a1a1a;right:1148.50px;transform:scaleX(0.9407);transform-origin:100% 50%;">45.000,00</div>
<div class="t" style="top:339.20px;font-size:13.2px;font-weight:700;color:#1a1a1a;left:20.40px;transform:scaleX(0.9529);transform-origin:0 50%;">Already Saved</div>
<div class="t" style="top:339.05px;font-size:13.5px;color:#1a1a1a;right:1148.50px;transform:scaleX(0.9381);transform-origin:100% 50%;">2.800,00</div>
<div class="t" style="top:363.05px;font-size:13.5px;color:#111;left:20.40px;transform:scaleX(0.9402);transform-origin:0 50%;">Progress %</div>
<div class="a" style="left:143px;top:379px;width:127px;height:20px;background:#fae6b1;border:1px solid #e4cd8a;"></div>
<div class="a" style="left:143px;top:398px;width:127px;height:21px;background:#fae6b1;border:1px solid #e4cd8a;"></div>
<div class="t" style="top:382.20px;font-size:13.2px;font-weight:700;color:#1a1a1a;right:1148.50px;transform:scaleX(0.8854);transform-origin:100% 50%;">43</div>
<div class="t" style="top:403.20px;font-size:13.2px;font-weight:700;color:#1a1a1a;right:1148.50px;transform:scaleX(0.9470);transform-origin:100% 50%;">981,3953488</div>
<div class="a" style="left:142px;top:357px;width:129px;height:23px;background:#fff;border:2px solid #217346;"></div>
<div class="t" style="top:363.05px;font-size:13.5px;color:#111;right:1148.50px;transform:scaleX(0.8713);transform-origin:100% 50%;">6%</div>
<div class="a" style="left:266.5px;top:375.5px;width:6.0px;height:6.0px;background:#217346;border:1px solid #fff;"></div>
<div class="a" style="left:395px;top:282px;width:127px;height:29px;background:#fff;border:1px solid #bdbdbd;"></div>
<div class="a" style="left:647px;top:282px;width:127px;height:29px;background:#fff;border:1px solid #bdbdbd;"></div>
<div class="a" style="left:521px;top:282px;width:127px;height:29px;background:#fae6b1;border:1px solid #e4cd8a;"></div>
<div class="a" style="left:773px;top:282px;width:127px;height:29px;background:#fae6b1;border:1px solid #e4cd8a;"></div>
<div class="a" style="left:395px;top:330px;width:127px;height:29px;background:#fff;border:1px solid #bdbdbd;"></div>
<div class="a" style="left:647px;top:330px;width:127px;height:29px;background:#fff;border:1px solid #bdbdbd;"></div>
<div class="a" style="left:521px;top:330px;width:127px;height:29px;background:#fae6b1;border:1px solid #e4cd8a;"></div>
<div class="a" style="left:773px;top:330px;width:127px;height:29px;background:#fae6b1;border:1px solid #e4cd8a;"></div>
<div class="a" style="left:18px;top:282px;width:1392px;height:1px;background:#8f8f8f;"></div>
<div class="t" style="top:291.20px;font-size:13.2px;font-weight:700;color:#1a1a1a;left:398.50px;transform:scaleX(0.9299);transform-origin:0 50%;">Your Progress %</div>
<div class="t" style="top:290.20px;font-size:13.2px;font-weight:700;color:#1a1a1a;left:650.70px;transform:scaleX(0.9895);transform-origin:0 50%;">Months Left</div>
<div class="clip" style="left:395px;top:331px;width:126px;height:27px">
<div class="t" style="left:3.5px;top:8.20px;font-size:13.2px;font-weight:700;color:#1a1a1a;transform:scaleX(0.9440);transform-origin:0 50%">Your Monthly Savings</div>
</div>
<div class="clip" style="left:647px;top:331px;width:126px;height:27px">
<div class="t" style="left:3.7px;top:8.20px;font-size:13.2px;font-weight:700;color:#1a1a1a;transform:scaleX(0.9698);transform-origin:0 50%">Remaining Wedding Budget</div>
</div>
<div class="t" style="top:289.40px;font-size:16.8px;font-weight:700;color:#1a1a1a;right:770.70px;transform:scaleX(1.0383);transform-origin:100% 50%;">B8</div>
<div class="t" style="top:289.40px;font-size:16.8px;font-weight:700;color:#1a1a1a;right:519.20px;transform:scaleX(1.0151);transform-origin:100% 50%;">B9</div>
<div class="t" style="top:338.40px;font-size:16.8px;font-weight:700;color:#1a1a1a;right:770.70px;transform:scaleX(1.0707);transform-origin:100% 50%;">B10</div>
<div class="t" style="top:337.40px;font-size:16.8px;font-weight:700;color:#1a1a1a;right:519.20px;transform:scaleX(1.1640);transform-origin:100% 50%;">42.200,00</div>
<div class="t" style="top:383.20px;font-size:13.2px;font-weight:700;color:#1a1a1a;left:300.50px;transform:scaleX(0.9082);transform-origin:0 50%;">Progress Bar</div>
<div class="a" style="left:395px;top:378px;width:127px;height:21px;background:#ededed;border:1px solid #c8c8c8;"></div>
<div class="a" style="left:521px;top:378px;width:127px;height:21px;background:#ededed;border:1px solid #c8c8c8;"></div>
<div class="a" style="left:647px;top:378px;width:127px;height:21px;background:#ededed;border:1px solid #c8c8c8;"></div>
<div class="a" style="left:773px;top:378px;width:127px;height:21px;background:#ededed;border:1px solid #c8c8c8;"></div>
<div class="a" style="left:899px;top:378px;width:127px;height:21px;background:#ededed;border:1px solid #c8c8c8;"></div>
<div class="a" style="left:297px;top:438px;width:99px;height:21px;background:#fdf3e5;border:1px solid #d1c9ae;"></div>
<div class="a" style="left:395px;top:438px;width:127px;height:21px;background:#fdf3e5;border:1px solid #d1c9ae;"></div>
<div class="a" style="left:297px;top:458px;width:99px;height:21px;background:#fdf3e5;border:1px solid #d1c9ae;"></div>
<div class="a" style="left:395px;top:458px;width:127px;height:21px;background:#fdf3e5;border:1px solid #d1c9ae;"></div>
<div class="t" style="top:444.15px;font-size:12.3px;color:#6a6a6a;left:300.00px;transform:scaleX(0.8831);transform-origin:0 50%;">Saved</div>
<div class="t" style="top:464.15px;font-size:12.3px;color:#6a6a6a;left:300.00px;transform:scaleX(0.9779);transform-origin:0 50%;">Remaining</div>
<div class="t" style="top:444.15px;font-size:12.3px;color:#6a6a6a;right:895.60px;transform:scaleX(0.9921);transform-origin:100% 50%;">2.800,00</div>
<div class="t" style="top:464.15px;font-size:12.3px;color:#6a6a6a;right:895.60px;">42.200,00</div>
<div class="clip" style="left:130px;top:470px;width:600px;height:291px">
<div class="a" style="left:8px;top:12px;width:568px;height:282px;border:1px solid #868686;border-radius:12.5px;background:#fff"></div>
</div>
<svg style="left:294px;top:495px" width="256" height="257" viewBox="0 0 256 257"><circle cx="127.8" cy="128.6" r="126.9" fill="#4f81bd"/></svg>
<div class="t" style="top:495.15px;font-size:12.3px;font-weight:700;color:#111;left:369.34px;transform:scaleX(0.8853);transform-origin:50% 50%;">Savings Progress</div>
<div class="a" style="left:624px;top:608px;width:7px;height:7px;background:#4f81bd;"></div>
<div class="a" style="left:624px;top:632px;width:7px;height:7px;background:#c0504d;"></div>
<div class="t" style="top:606.15px;font-size:12.3px;color:#111;left:634.00px;transform:scaleX(0.9060);transform-origin:0 50%;">Saved</div>
<div class="t" style="top:630.15px;font-size:12.3px;color:#111;left:634.00px;transform:scaleX(0.9694);transform-origin:0 50%;">Remaining</div>
<div class="a" style="left:966px;top:415px;width:419px;height:284px;border:1px solid #868686;border-radius:12.5px;background:#fff"></div>
<svg style="left:0;top:0" width="1415" height="792"><circle cx="1174.9" cy="556.3" r="101.6" fill="none" stroke="#c0504d" stroke-width="50.39999999999999"/><path d="M1174.90 429.50 A126.8 126.8 0 0 1 1223.22 439.07 L1204.01 485.66 A76.4 76.4 0 0 0 1174.90 479.90 Z" fill="#4f81bd"/><path d="M1223.22 439.07 L1204.01 485.66" stroke="#d9b6c4" stroke-width="0.8"/></svg>
<div class="t" style="top:428.15px;font-size:12.3px;font-weight:700;color:#111;left:1115.18px;transform:scaleX(0.9086);transform-origin:50% 50%;">Saved vs Remaining</div>
<div class="a" style="left:1303px;top:541px;width:7px;height:7px;background:#4f81bd;"></div>
<div class="a" style="left:1303px;top:565px;width:7px;height:7px;background:#c0504d;"></div>
<div class="t" style="top:539.15px;font-size:12.3px;color:#111;left:1313.20px;transform:scaleX(0.8888);transform-origin:0 50%;">Saved</div>
<div class="t" style="top:563.15px;font-size:12.3px;color:#111;left:1313.20px;transform:scaleX(0.9694);transform-origin:0 50%;">Remaining</div>
<div class="a" style="left:1410px;top:162px;width:5px;height:599px;background:#ececec;"></div>
<div class="a" style="left:1410px;top:162px;width:1px;height:599px;background:#a6a6a6;"></div>
<div class="a" style="left:1414px;top:162px;width:1px;height:518px;background:#8c8c8c;"></div>
<div class="a" style="left:1414px;top:680px;width:1px;height:66px;background:#d0d0d0;"></div>
<div class="a" style="left:1413.6px;top:746px;width:1.400000000000091px;height:14px;background:#7a7a7a;"></div>
<div class="a" style="left:0px;top:761px;width:1415px;height:28px;background:#e6e6e6;"></div>
<div class="a" style="left:0px;top:761px;width:1415px;height:1px;background:#b0b0b0;"></div>
<div class="a" style="left:0px;top:789px;width:1415px;height:3px;background:#f1f1f1;"></div>
<div class="a" style="left:1131px;top:789px;width:42px;height:3px;background:#c9c9c9;"></div>
<svg style="left:17px;top:770px" width="8" height="9" viewBox="0 0 8 9"><path d="M6 0.5 L1.5 4.5 L6 8.5 Z" fill="#c3c3c3"/></svg>
<svg style="left:45px;top:770px" width="8" height="9" viewBox="0 0 8 9"><path d="M2 0.5 L6.5 4.5 L2 8.5 Z" fill="#c3c3c3"/></svg>
<div class="a" style="left:93px;top:761px;width:91px;height:25px;background:#fff;"></div>
<div class="a" style="left:93px;top:784px;width:91px;height:2px;background:#217346;"></div>
<div class="a" style="left:92px;top:761px;width:1px;height:25px;background:#ababab;"></div>
<div class="a" style="left:184px;top:761px;width:1px;height:25px;background:#ababab;"></div>
<div class="t" style="top:768.30px;font-size:13px;font-weight:700;color:#217346;left:105.00px;transform:scaleX(0.9602);transform-origin:0 50%;">Dashboard</div>
<div class="t" style="top:768.30px;font-size:13px;color:#444;left:198.60px;transform:scaleX(0.9717);transform-origin:0 50%;">Monthly_Tracker</div>
<div class="t" style="top:768.30px;font-size:13px;color:#444;left:323.30px;transform:scaleX(0.9907);transform-origin:0 50%;">Simulator</div>
<div class="t" style="top:768.30px;font-size:13px;color:#444;left:407.90px;transform:scaleX(1.0413);transform-origin:0 50%;">Motivation</div>
<div class="a" style="left:309px;top:765px;width:1px;height:18px;background:#ababab;"></div>
<div class="a" style="left:393.5px;top:765px;width:1.0px;height:18px;background:#ababab;"></div>
<div class="a" style="left:484px;top:765px;width:1px;height:18px;background:#ababab;"></div>
<svg style="left:517px;top:766px" width="17" height="17" viewBox="0 0 17 17"><circle cx="8.5" cy="8.5" r="7.2" fill="none" stroke="#666" stroke-width="1.1"/><path d="M8.5 4.8 V12.2 M4.8 8.5 H12.2" stroke="#666" stroke-width="1.3"/></svg>
<div class="a" style="left:856.5px;top:770.5px;width:1.5px;height:1.5px;background:#b4b4b4;"></div>
<div class="a" style="left:856.5px;top:774px;width:1.5px;height:1.5px;background:#b4b4b4;"></div>
<div class="a" style="left:856.5px;top:777.5px;width:1.5px;height:1.5px;background:#b4b4b4;"></div>
<div class="a" style="left:888px;top:768.5px;width:504px;height:14.5px;background:#f0f0f0;"></div>
<div class="a" style="left:873.5px;top:768.5px;width:14.5px;height:14.5px;background:#fff;border:1px solid #8e8e8e;"></div>
<svg style="left:877px;top:771.5px" width="8" height="9" viewBox="0 0 8 9"><path d="M6 0.5 L1.5 4.5 L6 8.5 Z" fill="#111"/></svg>
<div class="a" style="left:887px;top:768.5px;width:446px;height:14.5px;background:#fff;border:1px solid #a8a8a8;"></div>
<div class="a" style="left:1393.5px;top:768.5px;width:14.5px;height:14.5px;background:#fff;border:1px solid #8e8e8e;"></div>
<svg style="left:1397px;top:771.5px" width="8" height="9" viewBox="0 0 8 9"><path d="M2 0.5 L6.5 4.5 L2 8.5 Z" fill="#111"/></svg>
</body></html>
